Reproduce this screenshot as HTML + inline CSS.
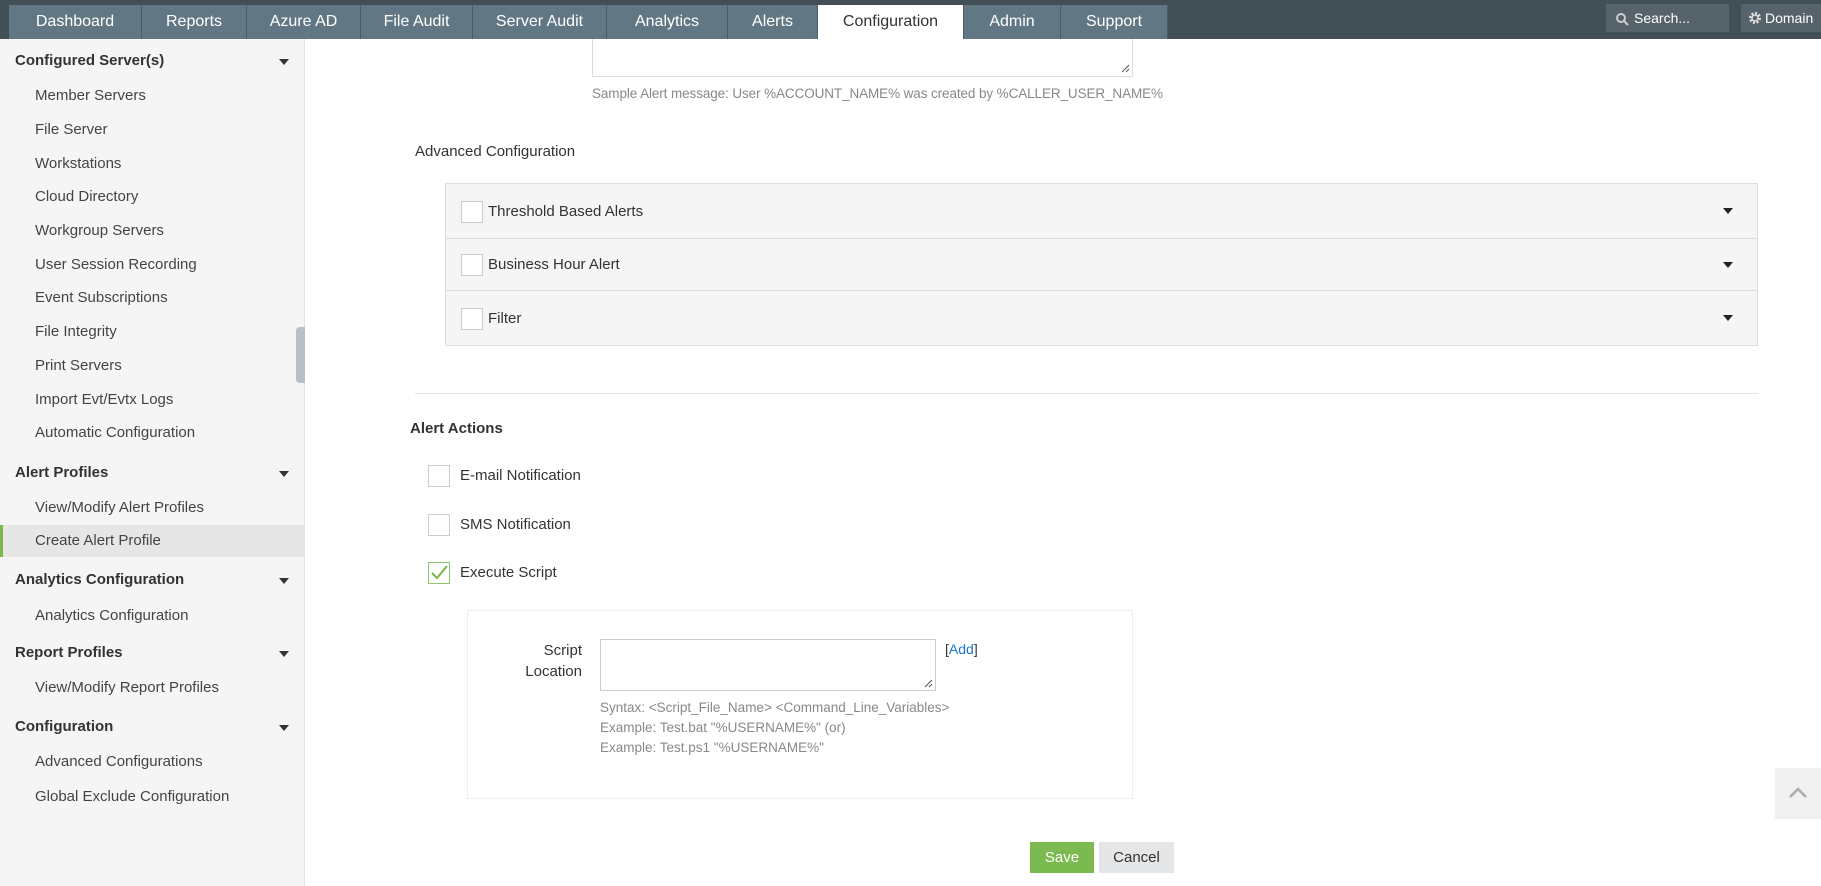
<!DOCTYPE html>
<html><head><meta charset="utf-8"><style>
*{box-sizing:border-box;margin:0;padding:0}
body{width:1821px;height:886px;overflow:hidden;background:#fff;font-family:"Liberation Sans",sans-serif;color:#333;position:relative;font-size:15px}
.a{position:absolute;white-space:nowrap}
#nav{position:absolute;left:0;top:0;width:1821px;height:39px;background:#434f57}
.tab{position:absolute;top:5px;height:34px;background:#617784;color:#fff;font-size:16px;line-height:34px;text-align:center;border-right:1px solid #4a5b66}
.tab.on{background:#fff;color:#333}
#side{position:absolute;left:0;top:39px;width:305px;height:847px;background:#f5f5f5;border-right:1px solid #e3e3e3}
.h{position:absolute;left:15px;font-weight:bold;font-size:15px;color:#333}
.i{position:absolute;left:35px;font-size:15px;color:#444}
.arr{position:absolute;left:279px;width:0;height:0;border-left:5px solid transparent;border-right:5px solid transparent;border-top:6px solid #333}
.cb{position:absolute;width:22px;height:22px;border:1px solid #ccc;background:#fff}
.row{position:absolute;left:445px;width:1313px;background:#f5f5f5;border:1px solid #ddd}
.ra{position:absolute;right:24px;top:50%;margin-top:-3px;width:0;height:0;border-left:5px solid transparent;border-right:5px solid transparent;border-top:6px solid #222}
.g{color:#888;font-size:14px}
</style></head><body>
<div id="nav">
<div class="tab" style="left:9px;width:133px">Dashboard</div>
<div class="tab" style="left:142px;width:105px">Reports</div>
<div class="tab" style="left:247px;width:114px">Azure AD</div>
<div class="tab" style="left:361px;width:112px">File Audit</div>
<div class="tab" style="left:473px;width:134px">Server Audit</div>
<div class="tab" style="left:607px;width:121px">Analytics</div>
<div class="tab" style="left:728px;width:90px">Alerts</div>
<div class="tab on" style="left:818px;width:146px">Configuration</div>
<div class="tab" style="left:964px;width:97px">Admin</div>
<div class="tab" style="left:1061px;width:107px">Support</div>
<div class="a" style="left:1606px;top:4px;width:123px;height:28px;background:#57636b;color:#fff;font-size:14px;line-height:28px;padding-left:28px">Search...
<svg style="position:absolute;left:9px;top:8px" width="14" height="14"><circle cx="6" cy="6" r="4" stroke="#ccc" stroke-width="2" fill="none"/><path d="M9 9l4 4" stroke="#ccc" stroke-width="2"/></svg></div>
<div class="a" style="left:1741px;top:4px;width:90px;height:28px;background:#57636b;color:#fff;font-size:14px;line-height:28px;padding-left:24px">Domain
<svg style="position:absolute;left:7px;top:7px" width="14" height="14"><circle cx="7" cy="7" r="4.5" stroke="#ddd" stroke-width="3" fill="none" stroke-dasharray="2 1.5"/><circle cx="7" cy="7" r="3" stroke="#ddd" stroke-width="1.5" fill="none"/></svg></div>
</div>
<div id="side">
<div class="h" style="top:13px">Configured Server(s)</div><div class="arr" style="top:20px"></div>
<div class="i" style="top:48px">Member Servers</div>
<div class="i" style="top:82px">File Server</div>
<div class="i" style="top:116px">Workstations</div>
<div class="i" style="top:149px">Cloud Directory</div>
<div class="i" style="top:183px">Workgroup Servers</div>
<div class="i" style="top:217px">User Session Recording</div>
<div class="i" style="top:250px">Event Subscriptions</div>
<div class="i" style="top:284px">File Integrity</div>
<div class="i" style="top:318px">Print Servers</div>
<div class="i" style="top:352px">Import Evt/Evtx Logs</div>
<div class="i" style="top:385px">Automatic Configuration</div>
<div class="h" style="top:425px">Alert Profiles</div><div class="arr" style="top:432px"></div>
<div class="i" style="top:460px">View/Modify Alert Profiles</div>
<div style="position:absolute;left:0;top:486px;width:304px;height:32px;background:#e6e6e6;border-left:3px solid #7ab648"></div>
<div class="i" style="top:493px">Create Alert Profile</div>
<div class="h" style="top:532px">Analytics Configuration</div><div class="arr" style="top:539px"></div>
<div class="i" style="top:568px">Analytics Configuration</div>
<div class="h" style="top:605px">Report Profiles</div><div class="arr" style="top:612px"></div>
<div class="i" style="top:640px">View/Modify Report Profiles</div>
<div class="h" style="top:679px">Configuration</div><div class="arr" style="top:686px"></div>
<div class="i" style="top:714px">Advanced Configurations</div>
<div class="i" style="top:749px">Global Exclude Configuration</div>
</div>
<div class="a" style="left:296px;top:327px;width:9px;height:56px;background:#b9bfc3;border-radius:4px 0 0 4px"></div>
<div class="a" style="left:592px;top:39px;width:541px;height:38px;border:1px solid #ddd;border-top:none"></div>
<svg class="a" style="left:1121px;top:64px" width="9" height="9"><path d="M1 8L8 1M5 8L8 5" stroke="#555"/></svg>
<div class="a g" style="left:592px;top:86px;font-size:13.5px;letter-spacing:-0.1px">Sample Alert message: User %ACCOUNT_NAME% was created by %CALLER_USER_NAME%</div>
<div class="a" style="left:415px;top:143px;font-size:15px">Advanced Configuration</div>
<div class="row" style="top:183px;height:56px"><div class="cb" style="left:15px;top:17px"></div><div class="a" style="left:42px;top:19px">Threshold Based Alerts</div><div class="ra"></div></div>
<div class="row" style="top:239px;height:52px;border-top:none"><div class="cb" style="left:15px;top:15px"></div><div class="a" style="left:42px;top:17px">Business Hour Alert</div><div class="ra"></div></div>
<div class="row" style="top:290px;height:56px"><div class="cb" style="left:15px;top:17px"></div><div class="a" style="left:42px;top:19px">Filter</div><div class="ra"></div></div>
<div class="a" style="left:415px;top:393px;width:1343px;height:1px;background:#e3e3e3"></div>
<div class="a" style="left:410px;top:420px;font-weight:bold">Alert Actions</div>
<div class="cb" style="left:428px;top:465px"></div><div class="a" style="left:460px;top:467px">E-mail Notification</div>
<div class="cb" style="left:428px;top:514px"></div><div class="a" style="left:460px;top:516px">SMS Notification</div>
<div class="cb" style="left:428px;top:562px;border-color:#8fc46a"><svg width="20" height="20"><path d="M3 10l5 5L18 3" stroke="#7ab648" stroke-width="2" fill="none"/></svg></div><div class="a" style="left:460px;top:564px">Execute Script</div>
<div class="a" style="left:467px;top:610px;width:666px;height:189px;border:1px solid #eee"></div>
<div class="a" style="left:512px;top:640px;width:70px;text-align:right;white-space:normal;line-height:21px">Script Location</div>
<div class="a" style="left:600px;top:639px;width:336px;height:52px;border:1px solid #ccc"></div>
<svg class="a" style="left:924px;top:679px" width="9" height="9"><path d="M1 8L8 1M5 8L8 5" stroke="#555"/></svg>
<div class="a" style="left:945px;top:641px;font-size:14px">[<span style="color:#1a73c8">Add</span>]</div>
<div class="a g" style="left:600px;top:698px;line-height:20px;font-size:13.5px">Syntax: &lt;Script_File_Name&gt; &lt;Command_Line_Variables&gt;<br>Example: Test.bat "%USERNAME%" (or)<br>Example: Test.ps1 "%USERNAME%"</div>
<div class="a" style="left:1030px;top:842px;width:64px;height:31px;background:#7aba4f;color:#fff;text-align:center;line-height:31px">Save</div>
<div class="a" style="left:1099px;top:842px;width:75px;height:31px;background:#e4e6e7;color:#333;text-align:center;line-height:31px">Cancel</div>
<div class="a" style="left:1775px;top:768px;width:46px;height:51px;background:#f0f0f0"><svg style="position:absolute;left:13px;top:19px" width="20" height="12"><path d="M2 10l8-8 8 8" stroke="#aaa" stroke-width="2.5" fill="none"/></svg></div>
</body></html>
